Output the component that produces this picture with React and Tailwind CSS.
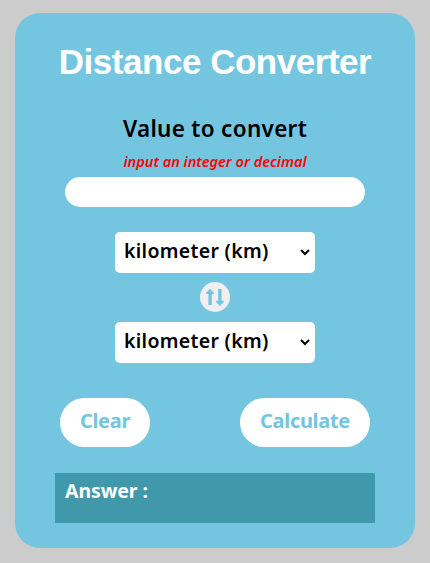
const units = ['kilometer (km)', 'meter (m)', 'centimeter (cm)', 'mile (mi)', 'foot (ft)'];

function UnitSelect({ label }) {
  return (
    <select
      aria-label={label}
      className="block h-[41px] w-[200px] rounded-[5px] border-r-2 border-white bg-white px-[5px] pb-[4px] text-[19.5px] font-semibold tracking-[0.3px] text-black"
    >
      {units.map((unit) => (
        <option key={unit}>{unit}</option>
      ))}
    </select>
  );
}

function SwapIcon() {
  return (
    <svg width="20" height="18" viewBox="0 0 20 18" fill="#74c5e0" aria-hidden="true">
      <path d="M5 0.8 9 4.8V6H6.8V17H3.4V6H1.2V4.8Z" />
      <path d="M15 18 11 14V12.8H13.2V1H16.6V12.8H18.8V14Z" />
    </svg>
  );
}

export default function App() {
  return (
    <main className="h-[563px] w-[430px] bg-[#cccccc] px-[15px] pt-[13px] font-['Noto_Sans','Open_Sans',sans-serif]">
      <section className="flex h-[535px] w-[400px] flex-col items-center rounded-[25px] bg-[#74c5e0]">
        <h1 className="mt-[29px] h-10 whitespace-nowrap font-['Liberation_Sans',Arial,sans-serif] text-[35px] leading-10 font-bold tracking-[-0.47px] text-white">
          Distance Converter
        </h1>
        <label htmlFor="value" className="mt-[32px] h-[30px] whitespace-nowrap text-[22.5px] leading-[30px] font-semibold tracking-[0.3px] text-black">
          Value to convert
        </label>
        <p className="mt-[7px] h-5 whitespace-nowrap text-[14.5px] leading-5 font-semibold text-[#ff0000] italic">
          input an integer or decimal
        </p>
        <input id="value" className="mt-[6px] h-[30px] w-[300px] rounded-full bg-white px-3 outline-none" />
        <div className="mt-[25px] flex flex-col items-center">
          <UnitSelect label="From" />
          <button aria-label="Swap units" className="mt-[9px] mb-[10px] flex h-[30px] w-[30px] items-center justify-center rounded-full bg-[#efefef]">
            <SwapIcon />
          </button>
          <UnitSelect label="To" />
        </div>
        <div className="mt-[35px] flex w-[310px] justify-between text-[20px] font-bold tracking-[-0.3px] text-[#74c5e0]">
          <button className="h-[49px] w-[90px] rounded-full bg-white pb-[3px]">Clear</button>
          <button className="h-[49px] w-[130px] rounded-full bg-white pb-[3px]">Calculate</button>
        </div>
        <div className="mt-[26px] h-[50px] w-[320px] bg-[#4098ab] px-[10px] pt-[4px] text-[19.5px] leading-7 font-bold tracking-[-0.1px] text-white">
          Answer :
        </div>
      </section>
    </main>
  );
}
